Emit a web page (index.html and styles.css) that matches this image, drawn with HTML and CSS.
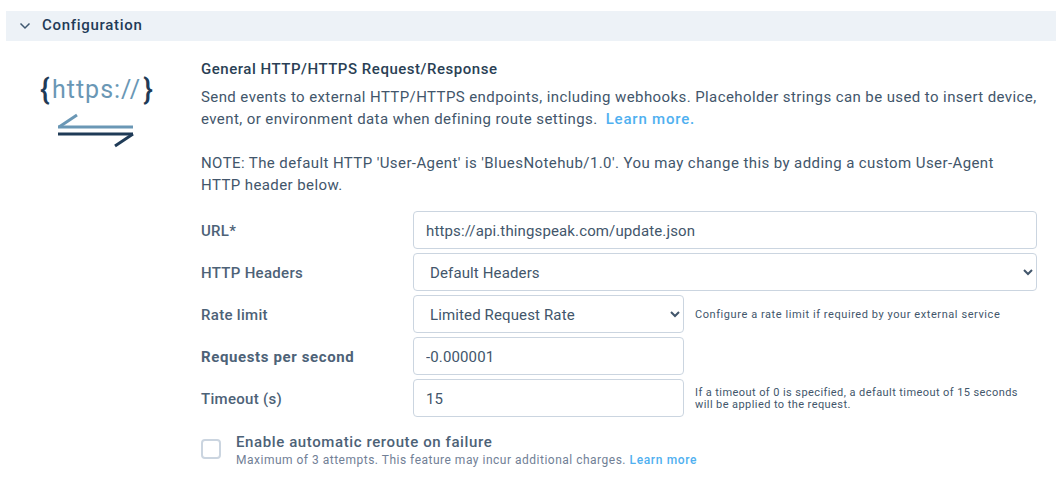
FILE: index.html
```html
<!DOCTYPE html>
<html lang="en">
<head>
<meta charset="utf-8">
<title>Configuration</title>
<link rel="stylesheet" href="styles.css">
</head>
<body>
<section class="panel">
  <header class="panel-head">
    <svg class="chev" width="12" height="8" viewBox="0 0 12 8"><path d="M1.5 1.5 6 6l4.5-4.5" fill="none" stroke="#3f5870" stroke-width="1.5"/></svg>
    <h2>Configuration</h2>
  </header>
  <div class="panel-body">
    <div class="logo">
      <div class="logo-text"><span class="brace">{</span><span class="scheme">https://</span><span class="brace">}</span></div>
      <svg class="arrows" width="78" height="36" viewBox="0 0 78 36">
        <path d="M1 15H76" stroke="#6a97b5" stroke-width="3" fill="none"/>
        <path d="M2 15 20 3" stroke="#6a97b5" stroke-width="3" fill="none"/>
        <path d="M1 22H76" stroke="#1f3b57" stroke-width="3" fill="none"/>
        <path d="M76 22 58 34" stroke="#1f3b57" stroke-width="3" fill="none"/>
      </svg>
    </div>
    <div class="content">
      <h3>General HTTP/HTTPS Request/Response</h3>
      <p class="desc">Send events to external HTTP/HTTPS endpoints, including webhooks. Placeholder strings can be used to insert device, event, or environment data when defining route settings. <a href="#">Learn more.</a></p>
      <p class="note">NOTE: The default HTTP 'User-Agent' is 'BluesNotehub/1.0'. You may change this by adding a custom User-Agent HTTP header below.</p>
      <form class="form">
        <label class="lbl">URL*</label>
        <input class="ctl wide" type="text" value="https://api.thingspeak.com/update.json">
        <label class="lbl">HTTP Headers</label>
        <select class="ctl wide"><option>Default Headers</option></select>
        <label class="lbl">Rate limit</label>
        <select class="ctl"><option>Limited Request Rate</option></select>
        <small class="help help-rate">Configure a rate limit if required by your external service</small>
        <label class="lbl strong">Requests per second</label>
        <input class="ctl" type="text" value="-0.000001">
        <span></span>
        <label class="lbl">Timeout (s)</label>
        <input class="ctl" type="text" value="15">
        <small class="help">If a timeout of 0 is specified, a default timeout of 15 seconds will be applied to the request.</small>
      </form>
      <div class="reroute">
        <span class="check"></span>
        <div>
          <div class="reroute-title">Enable automatic reroute on failure</div>
          <div class="reroute-sub">Maximum of 3 attempts. This feature may incur additional charges. <a href="#">Learn more</a></div>
        </div>
      </div>
    </div>
  </div>
</section>
</body>
</html>
```
FILE: styles.css
```css
* { box-sizing: border-box; }
html, body { margin: 0; height: 480px; overflow: hidden; background: #fff; }
body { font-family: Roboto, "Liberation Sans", sans-serif; color: #42566b; padding-top: 11px; }
.panel { margin-left: 6px; }
.panel-head { height: 30px; background: #edf2f7; display: flex; align-items: center; padding: 0 0 2px 13px; gap: 11px; }
.panel-head h2 { margin: 0; font-size: 15px; font-weight: 500; color: #1f3b57; letter-spacing: .7px; }
.chev { margin-top: 2px; }
.panel-body { display: flex; }
.logo { width: 195px; padding: 34px 0 0 34px; }
.logo-text { display: flex; align-items: center; font-size: 25px; line-height: 30px; width: 113px; justify-content: space-between; }
.brace { color: #1f3b57; font-weight: 500; font-size: 29px; }
.scheme { color: #6a97b5; letter-spacing: 1px; }
.arrows { display: block; margin: 7px 0 0 17px; }
.content { width: 836px; padding-top: 18px; }
h3 { margin: 0; font-size: 15px; line-height: 20px; font-weight: 500; color: #2a3f55; letter-spacing: .53px; }
.desc, .note { margin: 0; font-size: 15px; line-height: 22px; letter-spacing: .41px; }
.desc { margin-top: 7px; }
.note { margin-top: 22px; width: 825px; }
.desc a { margin-left: 4px; letter-spacing: .8px; color: #4fb0f0; text-decoration: none; font-weight: 500; }
.reroute-sub a { letter-spacing: .65px; color: #4fb0f0; text-decoration: none; font-weight: 500; }
.form { display: grid; grid-template-columns: 212px 271px 1fr; column-gap: 0; row-gap: 4px; align-items: center; margin-top: 15px; width: 836px; }
.lbl { font-size: 15px; line-height: 20px; font-weight: 500; color: #4d6277; letter-spacing: .3px; padding-top: 2px; }
.strong { font-weight: 700; letter-spacing: .62px; }
.ctl { height: 38px; width: 271px; background: #fff; border: 1px solid #cbd5e0; border-radius: 4px; padding: 2px 12px 0; font: 15px Roboto, sans-serif; letter-spacing: .13px; color: #42566b; outline: none; }
.wide { grid-column: 2 / 4; width: 624px; }
.help { font-size: 11px; line-height: 12px; padding: 2px 0 0 11px; width: 340px; letter-spacing: .42px; }
.help-rate { letter-spacing: .57px; }
.reroute { display: flex; align-items: flex-start; margin-top: 15px; gap: 15px; }
.check { width: 20px; height: 20px; margin-top: 7px; border: 2px solid #cbd5e0; border-radius: 4px; }
.reroute-title { font-size: 15px; font-weight: 500; color: #4d6277; line-height: 20px; letter-spacing: .6px; }
.reroute-sub { font-size: 12px; line-height: 16px; color: #718096; letter-spacing: .5px; }
```
